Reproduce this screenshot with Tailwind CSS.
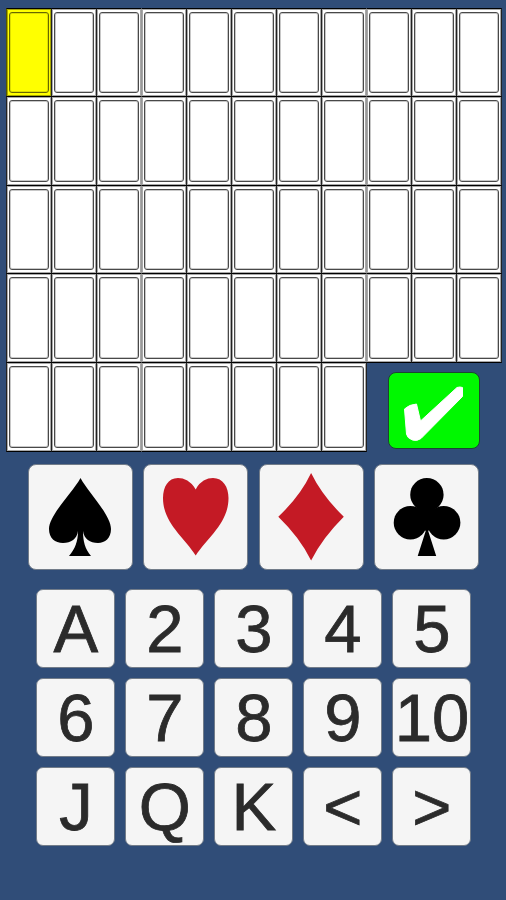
<!DOCTYPE html>
<html lang="en">
<head>
<meta charset="utf-8">
<title>Card entry</title>
<script src="https://cdn.jsdelivr.net/npm/@tailwindcss/browser@4"></script>
</head>
<body class="bg-[#304d78]">
<main class="w-[506px] h-[900px] overflow-hidden bg-[#304d78] pt-[8px] font-['Liberation_Sans',Arial,sans-serif] text-[#2b2b2b]">
  <section id="slots" class="grid grid-cols-[repeat(11,45px)] grid-rows-[88px_89px_88px_89px_89px] ml-[6px] h-[443px]"></section>
  <section class="flex gap-[10.6px] mt-[13px] ml-[27.5px]">
    <button class="w-[105px] h-[106px] shrink-0 rounded-[8px] bg-[#f5f5f5] border border-[#727c89]" aria-label="Spades">
      <svg class="block w-[103px] h-[104px]" viewBox="29 465 103 104"><path fill="#000" d="M80.500 478C88 492 111 515 111 529C111 538 105 543 98 543C90 543 84 539 83 531C83 541 85 549 91 556H69C75 549 78 541 78 531C77 539 71 543 63 543C55 543 49 538 49 529C49 515 73 492 80.500 478Z"/></svg>
    </button>
    <button class="w-[105px] h-[106px] shrink-0 rounded-[8px] bg-[#f5f5f5] border border-[#727c89]" aria-label="Hearts">
      <svg class="block w-[103px] h-[104px]" viewBox="144 465 103 104"><path fill="#c41a25" d="M195.700 489.500C191 481 184 478 178 478C168 478 163 487 163 498C163 523 184 537 195.700 555.500C208 537 228.500 523 228.500 498C228.500 487 223 478 213 478C207 478 200 481 195.700 489.500Z"/></svg>
    </button>
    <button class="w-[105px] h-[106px] shrink-0 rounded-[8px] bg-[#f5f5f5] border border-[#727c89]" aria-label="Diamonds">
      <svg class="block w-[103px] h-[104px]" viewBox="259.700 465 103 104"><path fill="#c41a25" d="M310.800 473Q322 496 343.500 516.700Q322 538 310.800 560.500Q300 538 278 516.700Q300 496 310.800 473Z"/></svg>
    </button>
    <button class="w-[105px] h-[106px] shrink-0 rounded-[8px] bg-[#f5f5f5] border border-[#727c89]" aria-label="Clubs">
      <svg class="block w-[103px] h-[104px]" viewBox="375.300 465 103 104"><g fill="#000"><circle cx="427.200" cy="494.700" r="16.700"/><circle cx="410.700" cy="522.700" r="16.700"/><circle cx="444" cy="522.700" r="16.700"/><path d="M418 509H437L433 526L428.500 531L436.500 556H418L426 531L421 526Z"/></g></svg>
    </button>
  </section>
  <section class="grid grid-cols-[repeat(5,79px)] auto-rows-[79px] gap-[10px] mt-[19px] ml-[36.400px] text-[67px] leading-[77px] [-webkit-text-stroke:0.8px_#2b2b2b]" id="keys"></section>
</main>
<script>
  const slots = document.getElementById('slots');
  // The last row holds eight cards, the confirm key takes the remaining columns.
  for (let i = 0; i < 52; i++) {
    const col = i % 11;
    const first = i === 0;
    const line = col === 3 || col === 8 ? 'border-l-[#999999] border-r-[#222222]' : 'border-x-[#222222]';
    const cell = document.createElement('div');
    cell.className = 'relative -mr-px -mb-px border border-y-black px-[2px] py-[3px] ' +
      (first ? 'bg-[#ffff00] border-x-[#555500] shadow-[inset_0_0_0_1px_#a8a800]' : 'bg-white shadow-[inset_0_0_0_1px_#a8a8a8] ' + line);
    const inner = document.createElement('div');
    inner.className = 'h-full rounded-[3px] border ' +
      (first ? 'border-[#666600] shadow-[inset_0_0_0_1px_#dddd00]' : 'border-[#484848] shadow-[inset_0_0_0_1px_#c8c8c8]');
    cell.append(inner);
    slots.append(cell);
  }
  const ok = document.createElement('button');
  ok.className = 'col-span-3 ml-[22px] mt-[10px] w-[92px] h-[77px] rounded-[8px] bg-[#00f800] border border-[#1c4530]';
  ok.setAttribute('aria-label', 'Confirm');
  ok.innerHTML = '<svg class="block w-[90px] h-[75px]" viewBox="389 373 90 75"><path fill="#fff" stroke="#fff" stroke-linejoin="round" d="M404.500 409Q409 404.500 416.500 404L420.500 421L457 387.500Q460 386.500 462.500 387.500V396.500L421 438.500Q417 441.500 412.500 440Q407 438 406.500 434Z"/></svg>';
  slots.append(ok);
  const keys = document.getElementById('keys');
  for (const k of ['A','2','3','4','5','6','7','8','9','10','J','Q','K','<','>']) {
    const b = document.createElement('button');
    b.className = 'flex justify-center rounded-[7px] bg-[#f5f5f5] border border-[#727c89] whitespace-nowrap';
    b.textContent = k;
    keys.append(b);
  }
</script>
</body>
</html>
